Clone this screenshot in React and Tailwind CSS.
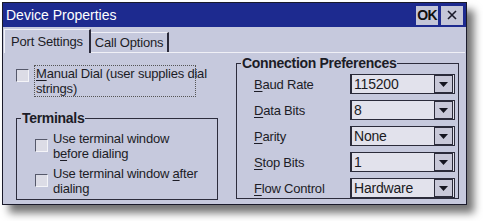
import React from "react";

const font = { fontFamily: '"Liberation Sans", Arial, sans-serif' };

function Check({ className = "" }) {
  return (
    <div
      className={`w-[13px] h-[13px] shrink-0 border border-t-[#55586a] border-l-[#55586a] border-r-[#f4f4f8] border-b-[#f4f4f8] bg-[#dcdce6] ${className}`}
    />
  );
}

function Combo({ value }) {
  return (
    <div className="flex items-center w-[105px] h-[20px] bg-[#e2e2ec] border border-[#2b2b3a] border-l-2">
      <span className="flex-1 pl-[2px] text-[14px] leading-none text-[#1a1a22] tracking-[-0.2px]">{value}</span>
      <div className="w-[19px] h-[18px] mr-[1px] bg-[#c8c8d8] border border-[#2b2b3a] flex items-center justify-center">
        <svg width="9" height="5" viewBox="0 0 9 5">
          <path d="M0 0h9L4.5 5z" fill="#15151f" />
        </svg>
      </div>
    </div>
  );
}

function U({ children }) {
  return <span className="underline underline-offset-2 decoration-1">{children}</span>;
}

export default function App() {
  const rows = [
    [<><U>B</U>aud Rate</>, "115200"],
    [<><U>D</U>ata Bits</>, "8"],
    [<><U>P</U>arity</>, "None"],
    [<><U>S</U>top Bits</>, "1"],
    [<><U>F</U>low Control</>, "Hardware"],
  ];
  return (
    <div className="w-[483px] h-[221px] bg-white pt-[2px] pl-[2px]" style={font}>
      <div className="w-[465px] h-[203px] bg-[#c6c9dd] border border-[#1a1a2a] shadow-[7px_8px_8px_rgba(0,0,0,0.55)] flex flex-col text-[#1c1c26] overflow-hidden">
        {/* Title bar */}
        <div className="h-[24px] shrink-0 bg-[#1d2a8f] flex items-center pl-[3px] pr-[3px]">
          <span className="flex-1 text-white text-[14px] leading-none">Device Properties</span>
          <div className="w-[22px] h-[19px] bg-[#c4c6d8] flex items-center justify-center text-[14px] font-bold text-[#111] tracking-tighter">OK</div>
          <div className="w-[22px] h-[19px] ml-[3px] bg-[#c4c6d8] flex items-center justify-center">
            <svg width="10" height="10" viewBox="0 0 10 10">
              <path d="M1 1L9 9M9 1L1 9" stroke="#1a1a2a" strokeWidth="1.6" />
            </svg>
          </div>
        </div>
        {/* Tabs */}
        <div className="h-[25px] shrink-0 flex items-end pl-[1px]">
          <div className="h-[24px] px-[6px] flex items-center text-[13px] tracking-[-0.2px] border-t border-l border-[#f0f0f6] border-r-2 border-r-[#2a2a3a] relative z-10 bg-[#c6c9dd] -mb-[1px]">
            Port Settings
          </div>
          <div className="h-[20px] px-[4px] flex items-center text-[13px] tracking-[-0.2px] border-t border-[#f0f0f6] border-r-2 border-r-[#2a2a3a]">
            Call Options
          </div>
        </div>
        {/* Panel */}
        <div className="flex-1 border-t border-[#f0f0f6] mx-[1px] flex pl-[12px] pr-[6px] text-[13px] tracking-[-0.2px]">
          <div className="w-[202px] flex flex-col">
            <div className="flex items-start mt-[12px]">
              <Check className="mt-[4px]" />
              <div className="ml-[5px] w-[162px] border border-dotted border-[#555] leading-[15px] px-[1px] whitespace-nowrap">
                <U>M</U>anual Dial (user supplies dial<br />strings)
              </div>
            </div>
            <div className="mt-[21px] relative border border-[#2c2c3c] h-[82px] pt-[12px] pl-[18px]">
              <span className="absolute -top-[10px] left-[4px] bg-[#c6c9dd] px-[1px] text-[14px] font-bold leading-[18px] tracking-[-0.3px]">Terminals</span>
              <div className="flex items-start">
                <Check className="mt-[8px]" />
                <div className="ml-[5px] leading-[15px]">
                  Use terminal window<br />b<U>e</U>fore dialing
                </div>
              </div>
              <div className="flex items-start mt-[5px]">
                <Check className="mt-[8px]" />
                <div className="ml-[5px] leading-[15px]">
                  Use terminal window <U>a</U>fter<br />dialing
                </div>
              </div>
            </div>
          </div>
          <div className="ml-[18px] mt-[10px] mb-[5px] flex-1 relative border border-[#2c2c3c] pt-[10px] pl-[17px] flex flex-col gap-[6px]">
            <span className="absolute -top-[10px] left-[4px] bg-[#c6c9dd] px-[1px] text-[14px] font-bold leading-[18px] tracking-[-0.3px]">Connection Preferences</span>
            {rows.map(([label, value], i) => (
              <div key={i} className="flex items-center">
                <span className="w-[96px] leading-none">{label}</span>
                <Combo value={value} />
              </div>
            ))}
          </div>
        </div>
      </div>
    </div>
  );
}
